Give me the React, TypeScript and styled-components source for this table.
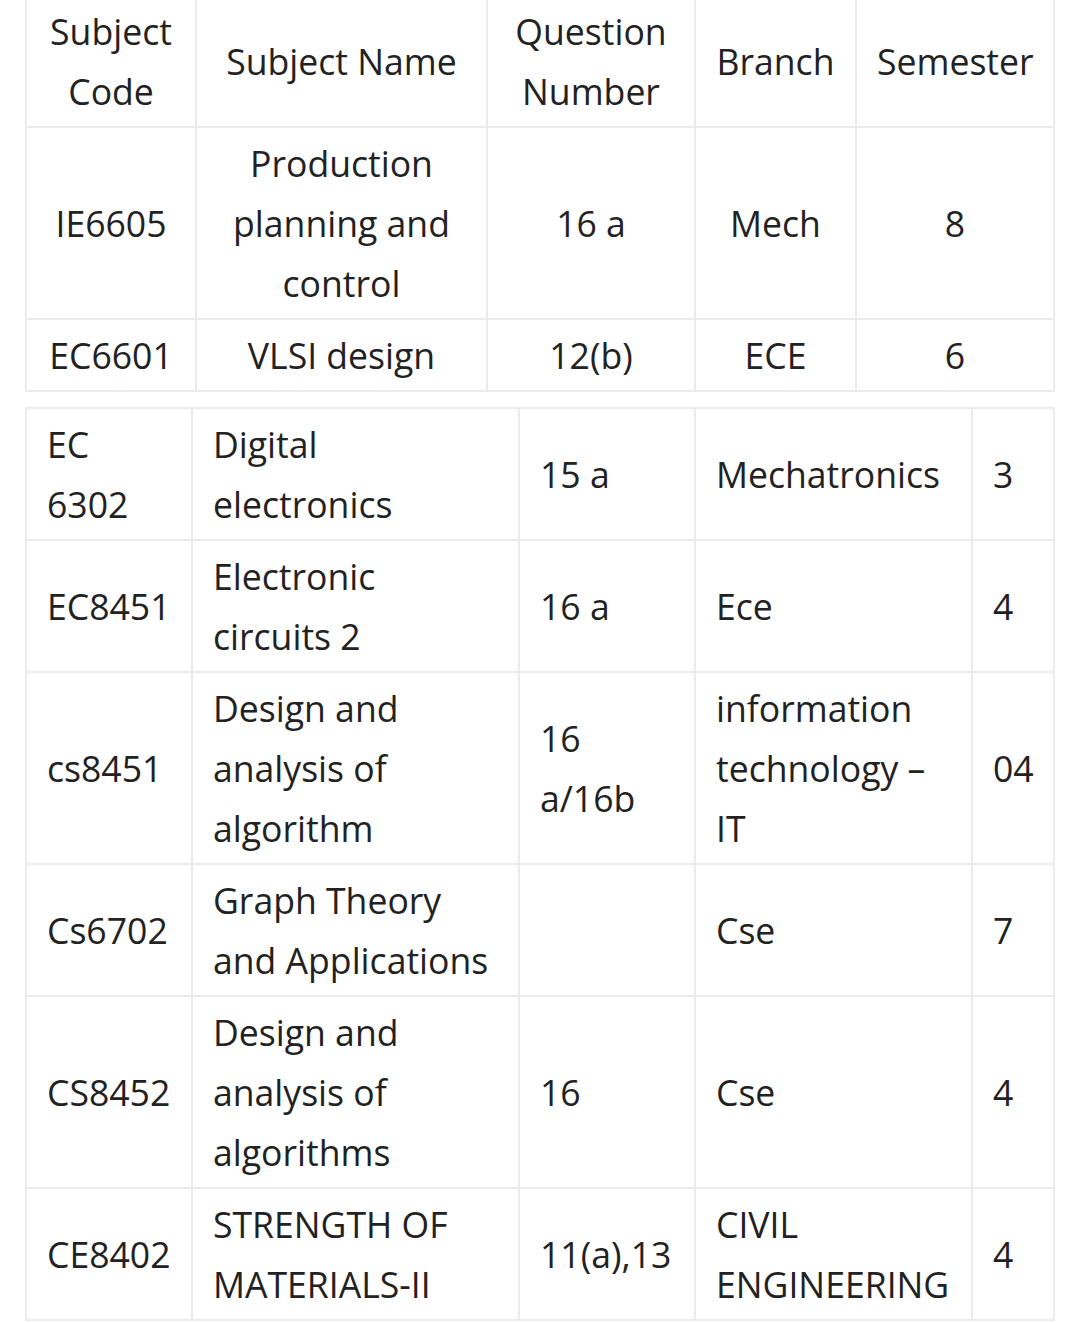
import React from "react";
import styled, { createGlobalStyle } from "styled-components";

const GlobalStyle = createGlobalStyle`
  html, body {
    margin: 0;
    padding: 0;
    background: #ffffff;
  }
  body {
    font-family: "Open Sans", "Noto Sans", "Liberation Sans", sans-serif;
    color: #222222;
  }
`;

const Page = styled.div`
  display: flex;
  flex-direction: column;
  align-items: flex-start;
  gap: 15px;
  padding-left: 25px;
  margin-top: -6px;
`;

const Table = styled.table`
  width: 1030px;
  table-layout: fixed;
  border-collapse: separate;
  border-spacing: 0;
  border-top: 2px solid #ebebeb;
  border-left: 2px solid #ebebeb;
  font-size: 35.6px;
  line-height: 60px;
`;

const Cell = styled.td<{ $align: "center" | "left" }>`
  border-right: 2px solid #ebebeb;
  border-bottom: 2px solid #ebebeb;
  padding: 5px 20px;
  text-align: ${(p) => p.$align};
  vertical-align: middle;
  font-weight: 400;
  white-space: normal;
`;

const HeadCell = styled(Cell).attrs({ as: "th" })``;

type Row = string[];

const firstCols = [170, 291, 208, 161, 198];
const firstHead = ["Subject Code", "Subject Name", "Question Number", "Branch", "Semester"];
const firstRows: Row[] = [
  ["IE6605", "Production planning and control", "16 a", "Mech", "8"],
  ["EC6601", "VLSI design", "12(b)", "ECE", "6"],
];

const secondCols = [166, 327, 176, 277, 82];
const secondRows: Row[] = [
  ["EC 6302", "Digital electronics", "15 a", "Mechatronics", "3"],
  ["EC8451", "Electronic circuits 2", "16 a", "Ece", "4"],
  ["cs8451", "Design and analysis of algorithm", "16 a/16b", "information technology – IT", "04"],
  ["Cs6702", "Graph Theory and Applications", "", "Cse", "7"],
  ["CS8452", "Design and analysis of algorithms", "16", "Cse", "4"],
  ["CE8402", "STRENGTH OF MATERIALS-II", "11(a),13", "CIVIL ENGINEERING", "4"],
];

export default function App() {
  return (
    <>
      <GlobalStyle />
      <Page>
        <Table>
          <colgroup>
            {firstCols.map((w, i) => (
              <col key={i} style={{ width: w }} />
            ))}
          </colgroup>
          <thead>
            <tr>
              {firstHead.map((h) => (
                <HeadCell key={h} $align="center">
                  {h}
                </HeadCell>
              ))}
            </tr>
          </thead>
          <tbody>
            {firstRows.map((r, i) => (
              <tr key={i}>
                {r.map((c, j) => (
                  <Cell key={j} $align="center">
                    {c}
                  </Cell>
                ))}
              </tr>
            ))}
          </tbody>
        </Table>
        <Table>
          <colgroup>
            {secondCols.map((w, i) => (
              <col key={i} style={{ width: w }} />
            ))}
          </colgroup>
          <tbody>
            {secondRows.map((r, i) => (
              <tr key={i}>
                {r.map((c, j) => (
                  <Cell key={j} $align="left">
                    {c}
                  </Cell>
                ))}
              </tr>
            ))}
          </tbody>
        </Table>
      </Page>
    </>
  );
}
